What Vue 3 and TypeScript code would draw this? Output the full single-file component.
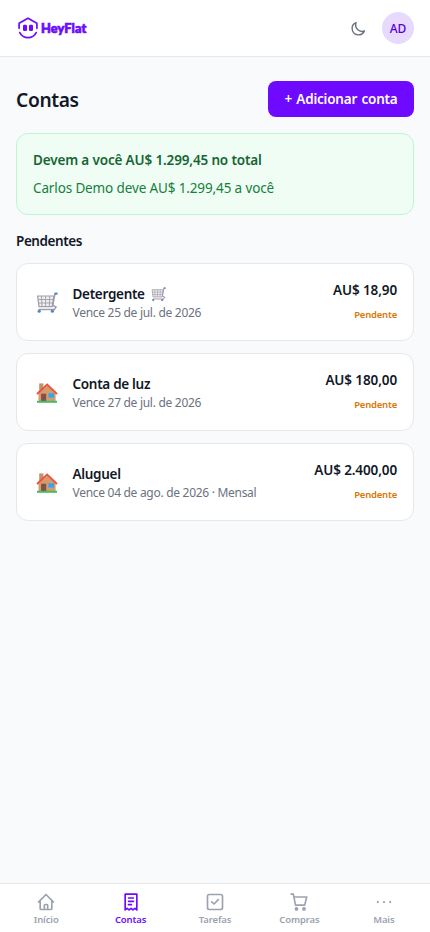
<script setup lang="ts">
interface Bill {
  id: number
  title: string
  icon: 'cart' | 'house'
  titleCart?: boolean
  due: string
  amount: string
}

const bills: Bill[] = [
  { id: 1, title: 'Detergente', icon: 'cart', titleCart: true, due: 'Vence 25 de jul. de 2026', amount: 'AU$ 18,90' },
  { id: 2, title: 'Conta de luz', icon: 'house', due: 'Vence 27 de jul. de 2026', amount: 'AU$ 180,00' },
  { id: 3, title: 'Aluguel', icon: 'house', due: 'Vence 04 de ago. de 2026 · Mensal', amount: 'AU$ 2.400,00' },
]

const tabs: { name: string; label: string }[] = [
  { name: 'home', label: 'Início' },
  { name: 'bills', label: 'Contas' },
  { name: 'tasks', label: 'Tarefas' },
  { name: 'shopping', label: 'Compras' },
  { name: 'more', label: 'Mais' },
]
</script>

<template>
  <div class="app">
    <svg class="defs" width="0" height="0" aria-hidden="true">
      <symbol id="cart" viewBox="0 0 22 22">
        <path d="M1.6 4H17.8L16.2 14.6H3Z" fill="#efeef1" stroke="#a19da5" stroke-width="1.2" />
        <path d="M2 7.5H17M2.6 11H16.6M5.5 4l.5 10.4M9.6 4v10.4M13.7 4l-.4 10.4" fill="none" stroke="#a8a4ac" stroke-width="1" />
        <path d="M20 1.9H18.9L16.8 13.4L20 15.1L18.4 17.6H2.6" fill="none" stroke="#a29ba8" stroke-width="1.5" />
        <path d="M18.6 1.6H21.6" stroke="#4682ca" stroke-width="2" />
        <circle cx="3.2" cy="19.2" r="1.6" fill="#5586cc" />
        <circle cx="16.4" cy="19.2" r="1.6" fill="#5586cc" />
      </symbol>
      <symbol id="house" viewBox="0 0 22 22">
        <path d="M3.2 1.4H7.4V9H3.2Z" fill="#c29167" />
        <path d="M2.5 11.2L11.2 3.8L19.6 11.2V19.2H2.5Z" fill="#d69b6d" />
        <path d="M5.1 11.7H10.2V19H5.1Z" fill="#80504b" />
        <path d="M12.4 11.2H18V15.6H12.4Z" fill="#32a5f1" />
        <path d="M1 11.9L11.1 2.6L21 11.9" fill="none" stroke="#e8543d" stroke-width="2" />
        <path d="M1 19.8H21" stroke="#41bd65" stroke-width="2" />
      </symbol>
    </svg>

    <header class="topbar">
      <div class="brand">
        <svg class="brand-mark" viewBox="0 0 20 22" fill="none" stroke="#6d0aff" stroke-width="1.7" stroke-linecap="round" stroke-linejoin="round">
          <path d="M1.1 11.3V6.3L10 1.2L18.9 6.3V11.3M1.8 15.6C5.2 22.3 14.8 22.3 18.2 15.6" />
          <rect x="5" y="7.8" width="4" height="6.2" rx="1.2" fill="#6d0aff" stroke="none" />
          <rect x="11" y="7.8" width="4" height="6.2" rx="1.2" fill="#6d0aff" stroke="none" />
        </svg>
        <span class="brand-name">HeyFlat</span>
      </div>
      <div class="actions">
        <svg class="moon" viewBox="0 0 24 24" fill="none" stroke="#6b7280" stroke-width="2" stroke-linecap="round" stroke-linejoin="round">
          <path d="M20.354 15.354A9 9 0 018.646 3.646 9.003 9.003 0 0012 21a9.003 9.003 0 008.354-5.646z" />
        </svg>
        <span class="avatar"><span>AD</span></span>
      </div>
    </header>

    <main class="content">
      <div class="heading">
        <h1>Contas</h1>
        <button type="button">+ Adicionar conta</button>
      </div>

      <section class="balance">
        <p class="balance-total">Devem a você AU$ 1.299,45 no total</p>
        <p class="balance-person">Carlos Demo deve AU$ 1.299,45 a você</p>
      </section>

      <h2>Pendentes</h2>
      <div class="bills">
        <article v-for="bill in bills" :key="bill.id" class="bill">
          <svg class="bill-icon"><use :href="'#' + bill.icon" /></svg>
          <div class="bill-info">
            <h3>
              <span>{{ bill.title }}</span>
              <svg v-if="bill.titleCart" class="inline-icon"><use href="#cart" /></svg>
            </h3>
            <p>{{ bill.due }}</p>
          </div>
          <div class="bill-value">
            <strong>{{ bill.amount }}</strong>
            <span class="status">Pendente</span>
          </div>
        </article>
      </div>
    </main>

    <nav class="tabs">
      <a v-for="tab in tabs" :key="tab.name" class="tab" :class="{ active: tab.name === 'bills' }">
        <svg viewBox="0 0 24 24" fill="none" stroke="currentColor" stroke-width="2" stroke-linecap="round" stroke-linejoin="round">
          <path v-if="tab.name === 'home'" d="M3 12l2-2m0 0l7-7 7 7M5 10v10a1 1 0 001 1h3m10-11l2 2m-2-2v10a1 1 0 01-1 1h-3m-6 0a1 1 0 001-1v-4a1 1 0 011-1h2a1 1 0 011 1v4a1 1 0 001 1m-6 0h6" />
          <path v-else-if="tab.name === 'bills'" d="M5 2.5H19V21.5L16.7 19.6L14.3 21.5L12 19.6L9.7 21.5L7.3 19.6L5 21.5ZM9 7.2H15M9 11.2H15M9 15.2H12.5" />
          <template v-else-if="tab.name === 'tasks'">
            <rect x="3" y="3" width="18" height="18" rx="2" />
            <path d="M8 11.8l2.8 2.6L16 9.2" />
          </template>
          <template v-else-if="tab.name === 'shopping'">
            <path d="M2.5 2.5h2.7l2.6 13.2h11L21.3 6H6" />
            <circle cx="9" cy="20.3" r="1.3" fill="currentColor" />
            <circle cx="18" cy="20.3" r="1.3" fill="currentColor" />
          </template>
          <path v-else d="M4.6 12h.01M12 12h.01M19.4 12h.01" stroke-width="2.7" />
        </svg>
        <span>{{ tab.label }}</span>
      </a>
    </nav>
  </div>
</template>

<style>
body {
  margin: 0;
  background: #f9fafb;
}
</style>

<style scoped>
* {
  box-sizing: border-box;
}
.app {
  display: flex;
  flex-direction: column;
  height: 932px;
  background: #f9fafc;
  color: #111827;
  font-family: "Noto Sans", "Open Sans", sans-serif;
  font-size: 13.5px;
  line-height: 20px;
}
.defs {
  position: absolute;
}
h1, h2, h3, p {
  margin: 0;
}
.topbar {
  display: flex;
  align-items: center;
  justify-content: space-between;
  height: 57px;
  padding: 0 16px 0 18px;
  background: #fff;
  border-bottom: 1px solid #e5e7eb;
}
.brand {
  display: flex;
  align-items: center;
  gap: 3px;
}
.brand-mark {
  width: 20px;
  height: 22px;
}
.brand-name {
  color: #6d0aff;
  font-family: Lato, sans-serif;
  font-size: 12.8px;
  font-weight: 900;
  line-height: 20px;
  letter-spacing: 0.1px;
  -webkit-text-stroke: 0.7px #6d0aff;
}
.actions {
  display: flex;
  align-items: center;
  gap: 15.5px;
}
.moon {
  width: 17px;
  height: 17px;
}
.avatar {
  display: flex;
  align-items: center;
  justify-content: center;
  width: 32px;
  height: 32px;
  padding-top: 1px;
  border-radius: 50%;
  background: #e8d9ff;
  color: #5b00d6;
  font-size: 12px;
  font-weight: 500;
}
.content {
  flex: 1;
  padding: 24px 16px;
}
.heading {
  display: flex;
  align-items: center;
  justify-content: space-between;
  margin-bottom: 16px;
}
h1 {
  padding-top: 2px;
  font-size: 19.2px;
  font-weight: 600;
  line-height: 28px;
  letter-spacing: -0.35px;
}
button {
  width: 146px;
  height: 36px;
  padding: 0;
  border: 0;
  border-radius: 8px;
  background: #6d0aff;
  color: #fff;
  font: 600 13.5px/20px "Noto Sans", "Open Sans", sans-serif;
  letter-spacing: -0.2px;
  word-spacing: 1px;
  white-space: nowrap;
}
.balance {
  display: flex;
  flex-direction: column;
  gap: 8px;
  height: 82px;
  padding: 16px;
  border: 1px solid #bbf7d0;
  border-radius: 12px;
  background: #f0fdf4;
  white-space: nowrap;
}
.balance-total {
  color: #166534;
  font-weight: 600;
  letter-spacing: -0.15px;
}
.balance-person {
  color: #15803d;
  letter-spacing: -0.13px;
}
h2 {
  margin: 16px 0 12px;
  font-size: 13.5px;
  font-weight: 600;
  line-height: 20px;
  letter-spacing: -0.42px;
}
.bills {
  display: flex;
  flex-direction: column;
  gap: 12px;
}
.bill {
  display: flex;
  align-items: center;
  height: 78px;
  padding: 16px;
  border: 1px solid #e5e7eb;
  border-radius: 12px;
  background: #fff;
  white-space: nowrap;
}
.bill-icon {
  width: 22px;
  height: 22px;
  margin: 2px 14.5px 0 3px;
}
.bill-info {
  flex: 1;
}
h3 {
  display: flex;
  align-items: center;
  gap: 6px;
  font-size: 13.5px;
  font-weight: 600;
  line-height: 20px;
  letter-spacing: -0.3px;
}
.inline-icon {
  width: 15px;
  height: 15px;
}
.bill-info p {
  padding-top: 1px;
  margin-bottom: -1px;
  color: #6b7280;
  font-size: 12px;
  line-height: 16px;
  letter-spacing: -0.29px;
}
.bill-value {
  display: flex;
  flex-direction: column;
  align-items: flex-end;
  gap: 6px;
  height: 44px;
}
strong {
  font-weight: 600;
  letter-spacing: -0.12px;
}
.status {
  color: #d97706;
  font-size: 9.5px;
  font-weight: 600;
  line-height: 17px;
  letter-spacing: -0.2px;
}
.tabs {
  display: flex;
  height: 49px;
  padding: 8px 4px 0;
  border-top: 1px solid #e5e7eb;
  background: #fff;
}
.tab {
  display: flex;
  flex: 1;
  flex-direction: column;
  align-items: center;
  color: #9ca3af;
  font-size: 9.5px;
  font-weight: 600;
  line-height: 15px;
  letter-spacing: -0.12px;
}
.tab svg {
  width: 20px;
  height: 20px;
}
.tab.active {
  color: #6d0aff;
}
</style>
